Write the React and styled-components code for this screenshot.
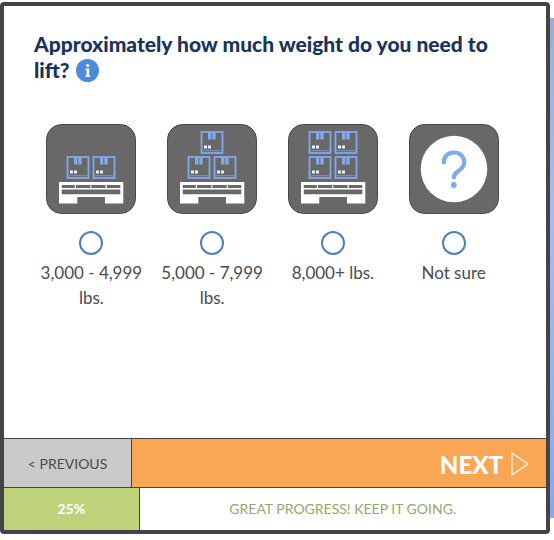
import React, { useState } from "react";
import styled, { createGlobalStyle } from "styled-components";

const ink = "#444445";
const blue = "#82a9ea";

const GlobalStyle = createGlobalStyle`
  *, *::before, *::after { box-sizing: border-box; }
  body {
    margin: 0;
    background: #fff;
    color: #4b4b4b;
    font-family: Lato, "Liberation Sans", sans-serif;
  }
  button, input { font: inherit; margin: 0; }
`;

const Page = styled.main`
  display: flex;
  min-height: 100vh;
  padding: 2px 0 6px;
`;

const Card = styled.form`
  flex: 1;
  display: flex;
  flex-direction: column;
  border: 4px solid ${ink};
  border-radius: 4px;
  background: #fff;
`;

const Edge = styled.div`
  width: 4px;
  margin: 16px 0;
  background: linear-gradient(#9aaed4, #a5bdf0 40%, #86a9ec);
`;

const Question = styled.fieldset`
  flex: 1;
  min-width: 0;
  margin: 0;
  padding: 25px 32px 24px 27px;
  border: 0;
`;

const Title = styled.legend`
  float: left;
  width: 100%;
  padding: 0 0 0 3px;
  margin-bottom: 41px;
  color: #19345a;
  font-size: 21px;
  font-weight: 900;
  line-height: 26px;
`;

const InfoButton = styled.button`
  display: inline-flex;
  width: 23px;
  height: 23px;
  margin-left: 1px;
  padding: 0;
  border: 0;
  border-radius: 50%;
  background: none;
  vertical-align: text-bottom;
  cursor: pointer;
`;

const Options = styled.div`
  clear: both;
  display: grid;
  grid-template-columns: repeat(4, 1fr);
`;

const Option = styled.label`
  display: flex;
  flex-direction: column;
  align-items: center;
  font-size: 17px;
  line-height: 25px;
  text-align: center;
  cursor: pointer;
`;

const Tile = styled.svg`
  display: block;
  width: 90px;
  height: 90px;
`;

const Radio = styled.input`
  appearance: none;
  width: 24px;
  height: 24px;
  margin: 17px 0 5px !important;
  border: 2px solid #517fbd;
  border-radius: 50%;
  background: #fff;
  cursor: pointer;
  &:checked { background: radial-gradient(#517fbd 45%, #fff 50%); }
`;

const OptionText = styled.span`
  padding: 0 8px;
`;

const Nav = styled.div`
  display: flex;
  height: 50px;
  border-top: 1px solid ${ink};
  border-bottom: 1px solid ${ink};
`;

const PreviousButton = styled.button`
  width: 128px;
  padding: 0;
  border: 0;
  border-right: 1px solid ${ink};
  background: #cacaca;
  color: #4b4b4b;
  font-size: 14px;
  cursor: pointer;
`;

const NextButton = styled.button`
  flex: 1;
  display: flex;
  align-items: center;
  justify-content: flex-end;
  gap: 8px;
  padding: 2px 17px 0 0;
  border: 0;
  background: #f9a655;
  color: #fff;
  font-size: 24px;
  font-weight: 900;
  cursor: pointer;
`;

const Progress = styled.div`
  display: flex;
  height: 42px;
  font-size: 14px;
  line-height: 42px;
  text-align: center;
`;

const ProgressBar = styled.div`
  border-right: 1px solid ${ink};
  background: #bed27a;
  color: #fff;
  font-weight: 700;
`;

const ProgressText = styled.div`
  flex: 1;
  color: #93a96f;
`;

function Box({ x, y }) {
  return (
    <g transform={`translate(${x} ${y})`}>
      <rect x="1" y="1" width="21" height="21" fill="none" stroke={blue} strokeWidth="1.8" />
      <path d="M7.5 1h3.4v7.5H7.5zM11.8 1h3.4v7.5h-3.4z" fill={blue} />
      <path d="M3.5 14.5h3v3h-3zM7.5 14.5h3v3h-3z" fill="#e8edf7" />
      <path d="M2 19.7h19" stroke={blue} strokeWidth=".7" />
    </g>
  );
}

function Pallet() {
  return (
    <g>
      <path d="M13 58h64.3v21.6H59V73H31.3v6.6H13z" fill="#fff" />
      <path
        d="M15.8 61h13v3h-13zM30 61h14.3v3H30zM45.3 61h14.3v3H45.3zM60.8 61h13.5v3H60.8zM15.8 65.5h58.5v4.8H15.8z"
        fill="#686868"
      />
    </g>
  );
}

function WeightIcon({ boxes }) {
  return (
    <Tile viewBox="0 0 90 90" aria-hidden="true">
      <rect x=".5" y=".5" width="89" height="89" rx="15" fill="#686868" stroke="#484848" />
      {boxes ? (
        <>
          {boxes.map(([x, y]) => <Box key={`${x}-${y}`} x={x} y={y} />)}
          <Pallet />
        </>
      ) : (
        <>
          <circle cx="45" cy="45" r="33.3" fill="#fff" />
          <path
            d="M34.8 38.5c0-5.8 4-10 9.9-10 6.2 0 10.5 4 10.5 9.7 0 3.6-1.8 5.8-4.8 8-3.8 2.7-5.4 4-5.4 7.3"
            fill="none"
            stroke={blue}
            strokeWidth="4.2"
            strokeLinecap="round"
          />
          <circle cx="44.8" cy="61" r="2.9" fill={blue} />
        </>
      )}
    </Tile>
  );
}

const options = [
  { label: "3,000 - 4,999 lbs.", boxes: [[20.5, 32], [46.5, 32]] },
  { label: "5,000 - 7,999 lbs.", boxes: [[33.5, 7], [20.5, 32], [46.5, 32]] },
  { label: "8,000+ lbs.", boxes: [[20.5, 7], [46.5, 7], [20.5, 32], [46.5, 32]] },
  { label: "Not sure" },
];

export default function App() {
  const [weight, setWeight] = useState("");
  const percent = 25;

  return (
    <>
      <GlobalStyle />
      <Page>
        <Card onSubmit={(event) => event.preventDefault()}>
          <Question>
            <Title>
              Approximately how much weight do you need to lift?{" "}
              <InfoButton type="button" aria-label="More information">
                <svg width="23" height="23" viewBox="0 0 23 23" aria-hidden="true">
                  <circle cx="11.5" cy="11.5" r="11.5" fill="#4d8ade" />
                  <circle cx="11.7" cy="6.5" r="1.6" fill="#fff" />
                  <path d="M9.5 9.5h3.7v7h1V18H9.5v-1.5h1V11h-1z" fill="#fff" />
                </svg>
              </InfoButton>
            </Title>
            <Options>
              {options.map(({ label, boxes }) => (
                <Option key={label}>
                  <WeightIcon boxes={boxes} />
                  <Radio
                    type="radio"
                    name="weight"
                    value={label}
                    checked={weight === label}
                    onChange={() => setWeight(label)}
                  />
                  <OptionText>{label}</OptionText>
                </Option>
              ))}
            </Options>
          </Question>
          <Nav>
            <PreviousButton type="button">&lt; PREVIOUS</PreviousButton>
            <NextButton type="submit">
              NEXT
              <svg width="18" height="24" viewBox="0 0 18 24" aria-hidden="true">
                <path d="M1 1v22l16-11z" fill="none" stroke="#fff" strokeWidth="1.1" />
              </svg>
            </NextButton>
          </Nav>
          <Progress>
            <ProgressBar style={{ width: `${percent}%` }}>{percent}%</ProgressBar>
            <ProgressText>GREAT PROGRESS! KEEP IT GOING.</ProgressText>
          </Progress>
        </Card>
        <Edge />
      </Page>
    </>
  );
}
